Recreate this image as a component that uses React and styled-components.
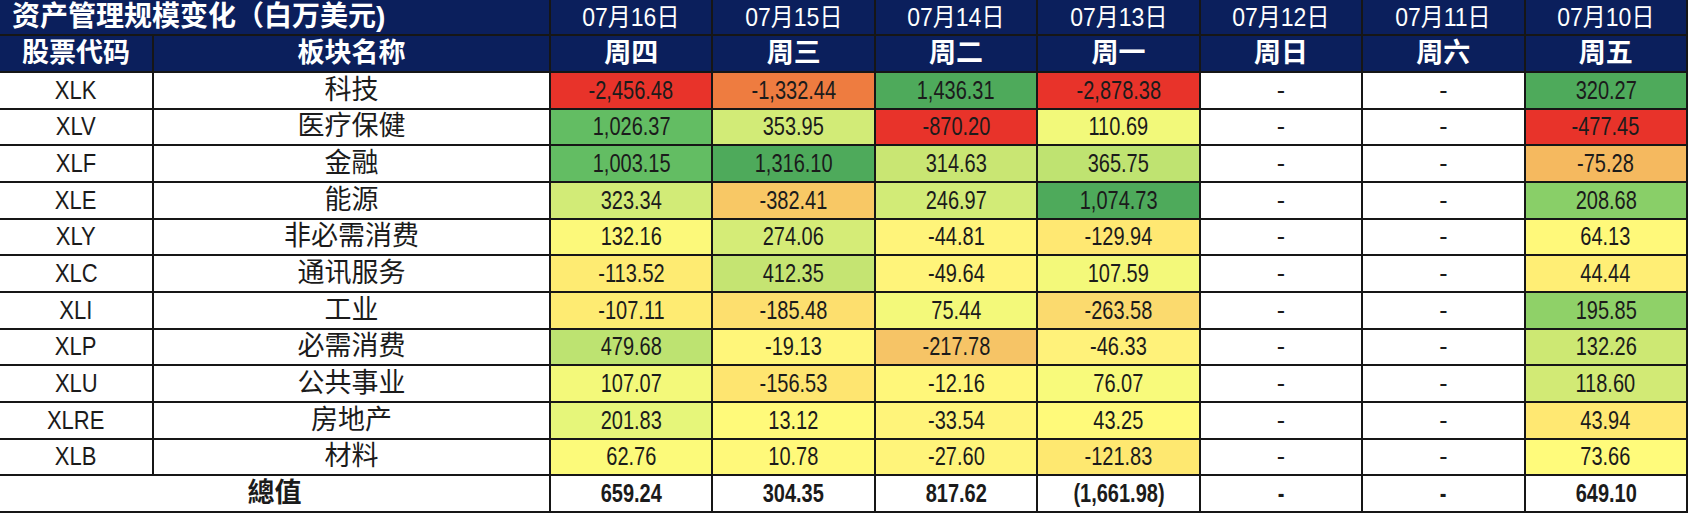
import styled, { createGlobalStyle } from "styled-components";

const GlobalStyle = createGlobalStyle`
  html, body {
    margin: 0;
    padding: 0;
    background: #ffffff;
  }
`;

const NAVY = "#0b1f5c";
const LINE = "#161616";

const Table = styled.table`
  border-collapse: collapse;
  table-layout: fixed;
  width: 1688px;
  font-family: "Liberation Sans", "Noto Sans CJK SC", sans-serif;
  font-size: 25px;
  color: #1b1b1b;
  border-bottom: 2px solid ${LINE};
  box-shadow: 0 2px 0 #c8c8c8;
`;

const HeadRow = styled.tr`
  height: ${(p) => p.$h}px;
  background: ${NAVY};
`;

const Row = styled.tr`
  height: 36.67px;
`;

const HeadCell = styled.th`
  border: 2px solid ${LINE};
  border-top: none;
  padding: 0;
  color: #ffffff;
  font-weight: ${(p) => (p.$bold ? 700 : 400)};
  font-size: ${(p) => p.$size || 25}px;
  text-align: ${(p) => (p.$left ? "left" : "center")};
  padding-left: ${(p) => (p.$left ? "12px" : "0")};
  line-height: 1;
  white-space: nowrap;
  &:first-child {
    border-left: none;
  }
`;

const Cell = styled.td`
  border: 2px solid ${LINE};
  padding: 0;
  text-align: center;
  line-height: 1;
  white-space: nowrap;
  background: ${(p) => p.$bg || "#ffffff"};
  font-weight: ${(p) => (p.$bold ? 700 : 400)};
  font-size: ${(p) => (p.$cjk ? 27 : 25)}px;
  &:first-child {
    border-left: none;
  }
`;

// Arial Narrow look: squeeze Liberation Sans horizontally
const Narrow = styled.span`
  display: inline-block;
  transform: scaleX(${(p) => p.$x || 0.8});
  transform-origin: center;
`;

const days = [
  ["07月16日", "周四"],
  ["07月15日", "周三"],
  ["07月14日", "周二"],
  ["07月13日", "周一"],
  ["07月12日", "周日"],
  ["07月11日", "周六"],
  ["07月10日", "周五"],
];

const RED = "#e8332a";
const DKGREEN = "#4eaa5b";

// [ticker, name, [value, colour] x 5 trading days (16, 15, 14, 13, 10)]
const rows = [
  ["XLK", "科技", [["-2,456.48", RED], ["-1,332.44", "#ee7c40"], ["1,436.31", DKGREEN], ["-2,878.38", RED], ["320.27", DKGREEN]]],
  ["XLV", "医疗保健", [["1,026.37", "#63bd63"], ["353.95", "#d2eb77"], ["-870.20", RED], ["110.69", "#f2f97a"], ["-477.45", RED]]],
  ["XLF", "金融", [["1,003.15", "#63bd63"], ["1,316.10", DKGREEN], ["314.63", "#c9e673"], ["365.75", "#bfe371"], ["-75.28", "#f5b95f"]]],
  ["XLE", "能源", [["323.34", "#d2eb77"], ["-382.41", "#f8c865"], ["246.97", "#d2eb77"], ["1,074.73", DKGREEN], ["208.68", "#89cf68"]]],
  ["XLY", "非必需消费", [["132.16", "#fcf97a"], ["274.06", "#d5ec77"], ["-44.81", "#fff47a"], ["-129.94", "#ffe872"], ["64.13", "#fff97a"]]],
  ["XLC", "通讯服务", [["-113.52", "#feeb72"], ["412.35", "#c5e472"], ["-49.64", "#fff47a"], ["107.59", "#f3f97a"], ["44.44", "#ffee75"]]],
  ["XLI", "工业", [["-107.11", "#feeb72"], ["-185.48", "#fddf6e"], ["75.44", "#f3f97a"], ["-263.58", "#fbda6e"], ["195.85", "#8fd168"]]],
  ["XLP", "必需消费", [["479.68", "#bde371"], ["-19.13", "#fff67a"], ["-217.78", "#f6c466"], ["-46.33", "#fff27a"], ["132.26", "#cde873"]]],
  ["XLU", "公共事业", [["107.07", "#f3f97a"], ["-156.53", "#fee570"], ["-12.16", "#fff77a"], ["76.07", "#f8fa7b"], ["118.60", "#d2ea75"]]],
  ["XLRE", "房地产", [["201.83", "#e6f67a"], ["13.12", "#fffa7a"], ["-33.54", "#fff47a"], ["43.25", "#fffa7a"], ["43.94", "#ffe872"]]],
  ["XLB", "材料", [["62.76", "#fcfa7a"], ["10.78", "#fff97a"], ["-27.60", "#fff47a"], ["-121.83", "#fee870"], ["73.66", "#fffb7b"]]],
];

const totals = ["659.24", "304.35", "817.62", "(1,661.98)", "-", "-", "649.10"];

function App() {
  return (
    <>
      <GlobalStyle />
      <Table>
        <colgroup>
          <col style={{ width: 153 }} />
          <col style={{ width: 397 }} />
          {days.map((d) => (
            <col key={d[0]} />
          ))}
        </colgroup>
        <thead>
          <HeadRow $h={35}>
            <HeadCell colSpan={2} $left $bold $size={28}>
              资产管理规模变化（白万美元)
            </HeadCell>
            {days.map((d) => (
              <HeadCell key={d[0]}>
                <Narrow $x={0.92}>{d[0]}</Narrow>
              </HeadCell>
            ))}
          </HeadRow>
          <HeadRow $h={37}>
            <HeadCell $bold $size={27}>股票代码</HeadCell>
            <HeadCell $bold $size={27}>板块名称</HeadCell>
            {days.map((d) => (
              <HeadCell key={d[1]} $bold $size={27}>
                {d[1]}
              </HeadCell>
            ))}
          </HeadRow>
        </thead>
        <tbody>
          {rows.map(([ticker, name, vals]) => (
            <Row key={ticker}>
              <Cell>
                <Narrow $x={0.88}>{ticker}</Narrow>
              </Cell>
              <Cell $cjk>{name}</Cell>
              {vals.slice(0, 4).map(([v, bg], i) => (
                <Cell key={i} $bg={bg}>
                  <Narrow>{v}</Narrow>
                </Cell>
              ))}
              <Cell>-</Cell>
              <Cell>-</Cell>
              <Cell $bg={vals[4][1]}>
                <Narrow>{vals[4][0]}</Narrow>
              </Cell>
            </Row>
          ))}
          <Row>
            <Cell colSpan={2} $bold $cjk>
              總值
            </Cell>
            {totals.map((t, i) => (
              <Cell key={i} $bold>
                <Narrow>{t}</Narrow>
              </Cell>
            ))}
          </Row>
        </tbody>
      </Table>
    </>
  );
}

export default App;
